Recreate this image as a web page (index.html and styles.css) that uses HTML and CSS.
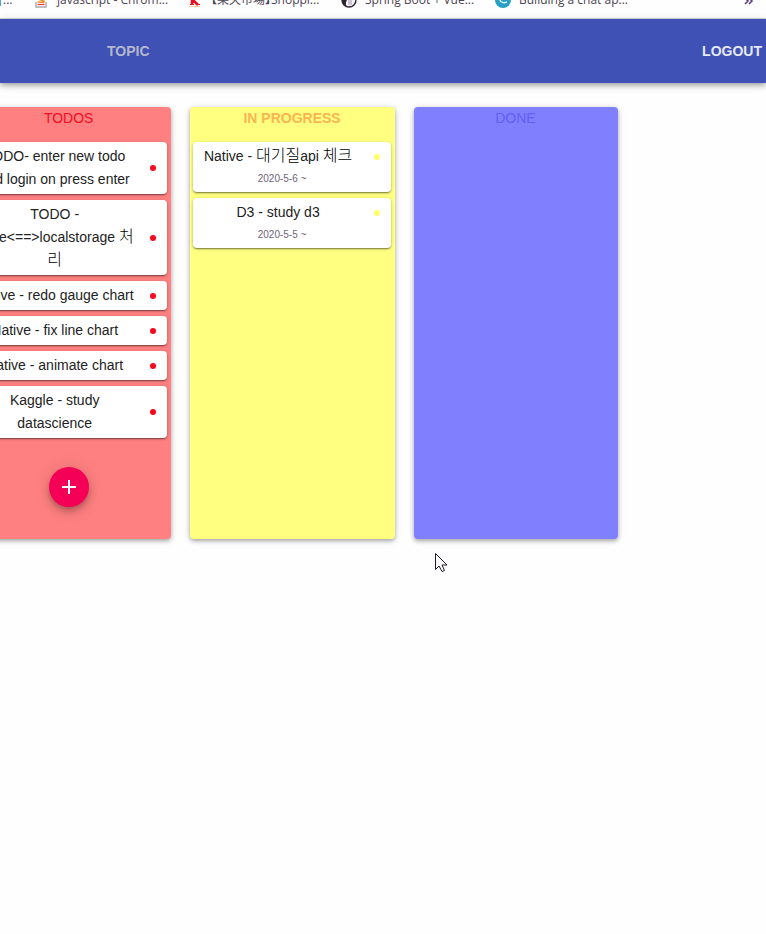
FILE: index.html
```html
<!DOCTYPE html>
<html lang="ko">
<head>
<meta charset="utf-8">
<title>Todo board</title>
<link rel="stylesheet" href="styles.css">
</head>
<body>
<nav class="bookmarks">
  <ul class="bookmark-list">
    <li class="bookmark bookmark-first"><svg class="favicon" viewBox="0 0 16 16"><path fill="#4aa3df" d="M11 2h5v12h-5z"/></svg><a href="#">...</a></li>
    <li class="bookmark"><svg class="favicon" viewBox="0 0 16 16"><path fill="none" stroke="#aaa" stroke-width="1.4" d="M3 10v5h10v-5"/><path stroke="#e33" stroke-width="1.2" d="M4.500 12.500h7"/><path stroke="#e8902a" stroke-width="1.6" d="M4.500 10l7 .5M5.500 7l6 2.500M8 4l4 4"/></svg><a href="#">javascript - Chrom...</a></li>
    <li class="bookmark"><svg class="favicon" viewBox="0 0 16 16"><path fill="none" stroke="#e8101c" stroke-width="2.600" d="M5 2v11M11 2L6 8l5 5"/><path stroke="#e8101c" stroke-width="1.2" d="M3 12.500h4M9 12.500h4"/><path stroke="#efcfa0" d="M2 14.500h11"/></svg><a class="tight-brackets" href="#">【楽天市場】Shoppi...</a></li>
    <li class="bookmark"><svg class="favicon" viewBox="0 0 16 16"><circle cx="8" cy="8" r="7" fill="#f5f2f7" stroke="#2b2230" stroke-width="1.4"/><path fill="#2b2230" d="M8 1a7 7 0 0 0-2 13.700C4 12 5 10 6 8z"/><path stroke="#a59bab" d="M8 5v8M10 7v6"/></svg><a href="#">Spring Boot + Vue...</a></li>
    <li class="bookmark"><svg class="favicon" viewBox="0 0 16 16"><circle cx="8" cy="8" r="8" fill="#2a9fc4"/><path fill="none" stroke="#d5f2fa" stroke-width="1.500" d="M5 5c-1 4 2 7 7 5"/></svg><a href="#">Building a chat ap...</a></li>
  </ul>
  <button class="more" type="button" aria-label="More bookmarks"><svg viewBox="0 0 10 8"><path fill="none" stroke="#5d3f85" stroke-width="1.600" d="M1-2l3 3-3 3M5-2l3 3-3 3"/></svg></button>
</nav>
<header class="appbar">
  <button class="nav-button nav-topic" type="button">TOPIC</button>
  <button class="nav-button" type="button">LOGOUT</button>
</header>
<main class="board">
  <section class="column todos">
    <h2>TODOS</h2>
    <ul class="cards">
      <li class="card"><p>TODO- enter new todo and login on press enter</p><span class="dot"></span></li>
      <li class="card"><p>TODO - store&lt;==&gt;localstorage <span class="hangul">처리</span></p><span class="dot"></span></li>
      <li class="card"><p>Native - redo gauge chart</p><span class="dot"></span></li>
      <li class="card"><p>Native - fix line chart</p><span class="dot"></span></li>
      <li class="card"><p>Native - animate chart</p><span class="dot"></span></li>
      <li class="card"><p>Kaggle - study datascience</p><span class="dot"></span></li>
    </ul>
    <button class="fab" type="button" aria-label="Add todo"><svg viewBox="0 0 24 24"><path fill="#fff" d="M19 13h-6v6h-2v-6H5v-2h6V5h2v6h6v2z"/></svg></button>
  </section>
  <section class="column progress">
    <h2>IN PROGRESS</h2>
    <ul class="cards">
      <li class="card"><p>Native - <span class="hangul">대기질</span>api <span class="hangul">체크</span></p><span class="dot"></span><time>2020-5-6 ~</time></li>
      <li class="card"><p>D3 - study d3</p><span class="dot"></span><time>2020-5-5 ~</time></li>
    </ul>
  </section>
  <section class="column done">
    <h2>DONE</h2>
  </section>
</main>
<svg class="cursor" viewBox="0 0 13 20"><path fill="#fff" stroke="#20182c" d="M.5.5v16l3.500-3.500 3 5.500 2.500-1-2.500-5.500h5z"/></svg>
</body>
</html>
```
FILE: styles.css
```css
* {
  box-sizing: border-box;
}

body {
  margin: 0;
  min-height: 100vh;
  background: #fefefe;
  color: #222;
  font: 14px/23px "Liberation Sans", "Noto Sans CJK KR", sans-serif;
}

button {
  border: 0;
  padding: 0;
  background: none;
  font: inherit;
  cursor: pointer;
}

ul {
  list-style: none;
  margin: 0;
  padding: 0;
}

.bookmarks {
  display: flex;
  align-items: flex-end;
  justify-content: space-between;
  height: 19px;
  padding: 0 12px 10px 0;
  border-bottom: 1px solid #d5d5d8;
  overflow: hidden;
}

.bookmark-list {
  display: flex;
  align-items: flex-end;
}

.bookmark {
  display: flex;
  align-items: center;
  gap: 8px;
  width: 154px;
  font: 12px/16px "Open Sans", "Noto Sans CJK JP", sans-serif;
  white-space: nowrap;
}

.bookmark-first {
  flex: none;
  gap: 2px;
  width: 48px;
  margin-left: -15px;
}

.bookmark a {
  color: #4b4453;
  text-decoration: none;
}

.bookmark .tight-brackets {
  font-feature-settings: "halt";
}

.favicon {
  flex: none;
  width: 16px;
  height: 16px;
}

.more {
  display: flex;
}

.more svg {
  width: 10px;
  height: 8px;
  overflow: visible;
}

.appbar {
  display: flex;
  align-items: center;
  justify-content: space-between;
  height: 64px;
  padding: 0 4px 0 107px;
  background: #3f51b5;
  box-shadow: 0 2px 4px -1px rgba(0, 0, 0, 0.2), 0 4px 5px rgba(0, 0, 0, 0.14), 0 1px 10px rgba(0, 0, 0, 0.12);
}

.nav-button {
  color: #e6e8f4;
  font-weight: 700;
}

.nav-topic {
  color: #b3b8cc;
}

.board {
  display: grid;
  grid-template-columns: repeat(3, 1fr);
  gap: 19px;
  width: 85%;
  margin: 24px 0 0 -33px;
}

.column {
  display: flex;
  flex-direction: column;
  padding: 0 4px 32px 3px;
  border-radius: 4px;
  box-shadow: 0 2px 4px rgba(0, 0, 0, 0.3), 0 1px 8px rgba(0, 0, 0, 0.1);
}

.column h2 {
  margin: 0 0 12px;
  font-size: 14px;
  line-height: 23px;
  font-weight: 400;
  text-align: center;
}

.todos {
  background: #ff8080;
}

.todos h2 {
  color: #f50b24;
}

.progress {
  background: #ffff80;
}

.progress h2 {
  color: #f8b552;
  font-weight: 700;
}

.done {
  background: #8080ff;
}

.done h2 {
  color: #6060f4;
}

.cards {
  display: grid;
  gap: 6px;
}

.card {
  display: grid;
  grid-template-columns: 1fr 28px;
  align-items: center;
  padding: 3px 0;
  border-radius: 4px;
  background: #fff;
  text-align: center;
  box-shadow: 0 2px 1px -1px rgba(0, 0, 0, 0.2), 0 1px 1px rgba(0, 0, 0, 0.14), 0 1px 3px rgba(0, 0, 0, 0.3);
}

.card p {
  margin: 0;
  padding: 0 4px;
}

.hangul {
  color: #000;
  font-size: 16px;
  font-weight: 300;
  line-height: 16px;
}

.card time {
  padding-left: 8px;
  color: #6d6577;
  font-size: 10px;
  line-height: 21px;
}

.dot {
  justify-self: center;
  width: 6px;
  height: 6px;
  border-radius: 50%;
  background: #f9061a;
}

.progress .dot {
  background: #ffff66;
}

.fab {
  display: flex;
  align-items: center;
  justify-content: center;
  align-self: center;
  width: 40px;
  height: 40px;
  margin-top: 29px;
  border-radius: 50%;
  background: #f50057;
  box-shadow: 0 3px 5px -1px rgba(0, 0, 0, 0.2), 0 6px 10px rgba(0, 0, 0, 0.14), 0 1px 18px rgba(0, 0, 0, 0.12);
}

.fab svg {
  width: 24px;
  height: 24px;
}

.cursor {
  position: absolute;
  left: 435px;
  top: 553px;
  width: 13px;
  height: 20px;
}
```
